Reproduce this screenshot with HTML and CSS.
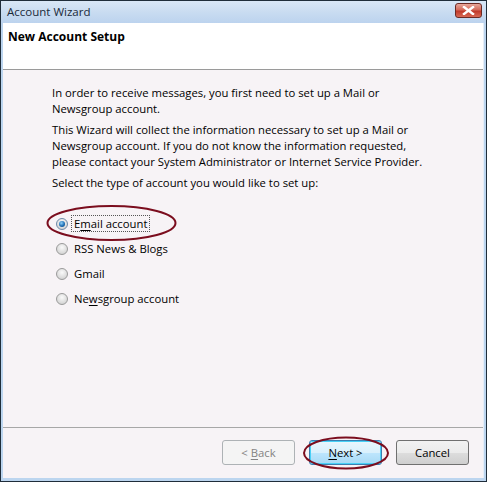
FILE: index.html
```html
<!DOCTYPE html>
<html>
<head>
<meta charset="utf-8">
<link rel="stylesheet" href="styles.css">
</head>
<body>
<div class="window">
  <div class="titlebar">
    <span class="title">Account Wizard</span>
    <span class="close"><svg width="13" height="9" viewBox="0 0 13 9"><path d="M2 1 L11 8 M11 1 L2 8" stroke="#fff" stroke-width="2.4" stroke-linecap="square"/></svg></span>
  </div>
  <div class="client">
    <div class="header">New Account Setup</div>
    <div class="body">
      <p class="para">In order to receive messages, you first need to set up a Mail or Newsgroup account.</p>
      <p class="para">This Wizard will collect the information necessary to set up a Mail or Newsgroup account. If you do not know the information requested, please contact your System Administrator or Internet Service Provider.</p>
      <p class="para">Select the type of account you would like to set up:</p>
      <div class="options">
        <div class="option">
          <span class="radio checked"></span><span class="label focus">E<u>m</u>ail account</span>
          <svg class="ring ring-email" width="131" height="38" viewBox="0 0 131 38"><ellipse cx="65.5" cy="19" rx="64" ry="17" fill="none" stroke="#7b0d1e" stroke-width="2"/></svg>
        </div>
        <div class="option"><span class="radio"></span><span class="label">RSS News &amp; Blogs</span></div>
        <div class="option"><span class="radio"></span><span class="label">Gmail</span></div>
        <div class="option"><span class="radio"></span><span class="label">Ne<u>w</u>sgroup account</span></div>
      </div>
    </div>
    <div class="footer">
      <button class="btn disabled">&lt; <u>B</u>ack</button>
      <span class="btn-wrap">
        <button class="btn default"><u>N</u>ext &gt;</button>
        <svg class="ring ring-next" width="88" height="34" viewBox="0 0 88 34"><ellipse cx="44" cy="17" rx="42" ry="15.5" fill="none" stroke="#7b0d1e" stroke-width="2"/></svg>
      </span>
      <button class="btn">Cancel</button>
    </div>
  </div>
</div>
</body>
</html>
```
FILE: styles.css
```css
html, body {
  margin: 0;
  padding: 0;
  background: #ffffff;
}
.window {
  width: 487px;
  height: 482px;
  box-sizing: border-box;
  border: 1px solid #1f2d3a;
  background: #bcd5ef;
  display: flex;
  flex-direction: column;
  font-family: "Open Sans", "Noto Sans", sans-serif;
  font-size: 11.3px;
  color: #000;
}
.titlebar {
  height: 22px;
  flex: none;
  display: flex;
  align-items: center;
  justify-content: space-between;
  padding: 0 4px 0 6px;
  background: linear-gradient(#d9e7f6, #c9dcf1 50%, #bcd3ee);
}
.title {
  font-size: 11.5px;
  color: #1a2a3a;
  margin-top: -2px;
}
.close {
  width: 27px;
  height: 15px;
  margin-top: -3px;
  box-sizing: border-box;
  border: 1px solid #6b2a24;
  border-radius: 3px;
  background: linear-gradient(#e7a89b, #d46a5a 45%, #c0392a 55%, #d86a55);
  display: flex;
  align-items: center;
  justify-content: center;
}
.client {
  flex: 1;
  margin: 0 2px 3px 2px;
  background: #f7f3f6;
  display: flex;
  flex-direction: column;
  border-right: 1px solid #e6eef7;
}
.header {
  height: 47px;
  flex: none;
  background: #ffffff;
  border-bottom: 1px solid #9a9a9a;
  font-weight: bold;
  font-size: 12px;
  padding: 5px 0 0 5px;
  box-sizing: border-box;
  line-height: 17px;
}
.body {
  flex: 1;
  padding: 15px 20px 0 49px;
}
.para {
  margin: 0 0 5px 0;
  line-height: 16px;
  width: 390px;
}
.options {
  margin-top: 24px;
  display: flex;
  flex-direction: column;
  gap: 8px;
}
.option {
  position: relative;
  display: flex;
  align-items: center;
  height: 17px;
}
.radio {
  width: 10px;
  height: 10px;
  border-radius: 50%;
  border: 1px solid #9a9a9a;
  background: radial-gradient(circle at 50% 35%, #fafafa, #d8d8d8 70%, #c8c8c8);
  margin: 0 3px 0 4px;
  box-sizing: content-box;
  position: relative;
}
.radio.checked {
  border-color: #6e8aa8;
}
.radio.checked::after {
  content: "";
  position: absolute;
  left: 2px;
  top: 2px;
  width: 6px;
  height: 6px;
  border-radius: 50%;
  background: radial-gradient(circle at 40% 35%, #8fd0f7, #1d6eb5 55%, #0c3a6a);
}
.label {
  padding: 0 2px;
  line-height: 15px;
  border: 1px solid transparent;
}
.label.focus {
  border: 1px dotted #555;
}
.ring {
  position: absolute;
  pointer-events: none;
}
.ring-email {
  left: -6px;
  top: -11px;
}
.footer {
  height: 51px;
  flex: none;
  border-top: 1px solid #a7a7a7;
  box-sizing: border-box;
  display: flex;
  justify-content: flex-end;
  align-items: center;
  gap: 14px;
  padding: 0 14px 2px 0;
}
.btn-wrap {
  position: relative;
  display: flex;
}
.ring-next {
  left: -7px;
  top: -4px;
}
.btn {
  width: 73px;
  height: 25px;
  box-sizing: border-box;
  border: 1px solid #707070;
  border-radius: 3px;
  background: linear-gradient(#f2f2f2, #ebebeb 50%, #dddddd 50%, #cfcfcf);
  font-family: "Open Sans", "Noto Sans", sans-serif;
  font-size: 11.3px;
  color: #000;
  padding: 0;
}
.btn.disabled {
  border-color: #adb2b5;
  background: #f4f4f4;
  color: #838383;
}
.btn.default {
  border-color: #3c7fb1;
  box-shadow: inset 0 0 0 1px #48d0f6;
  background: linear-gradient(#eaf6fd, #d9f0fc 50%, #bee6fd 50%, #a7d9f5);
}
u {
  text-decoration: underline;
  text-underline-offset: 2px;
}
```
